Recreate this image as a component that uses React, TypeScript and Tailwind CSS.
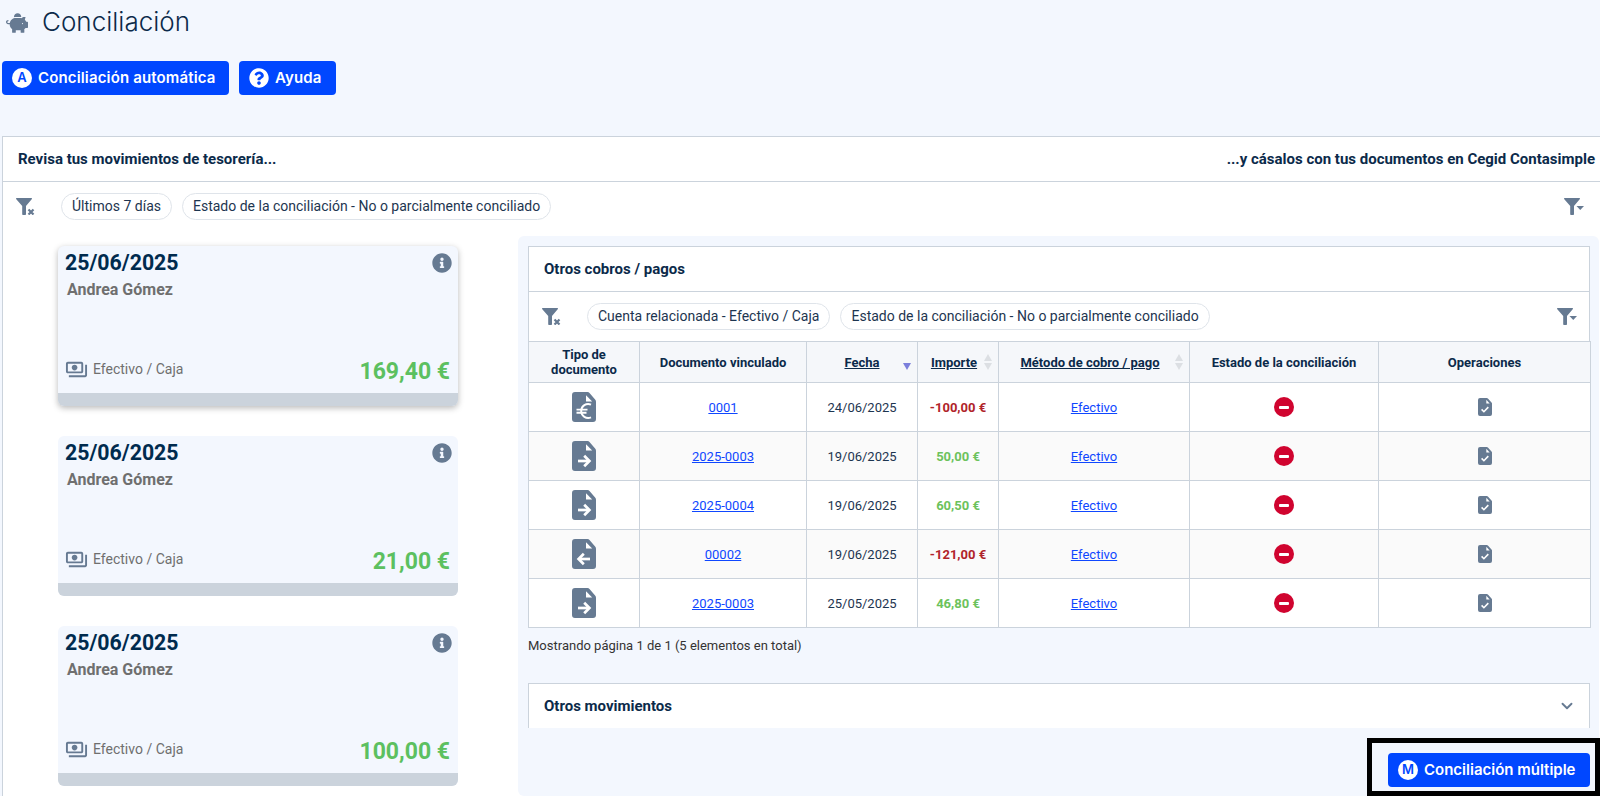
import { ChevronDown } from "lucide-react";
import { FaInfoCircle, FaPiggyBank, FaQuestionCircle } from "react-icons/fa";
import { MdOutlinePayments } from "react-icons/md";

const roboto = "font-['Roboto',sans-serif]";
const poppins = "font-['Inter',sans-serif]";

const cards = [
  { amount: "169,40 €", shadow: true },
  { amount: "21,00 €", shadow: false },
  { amount: "100,00 €", shadow: false }
];

const rows = [
  { kind: "euro", doc: "0001", date: "24/06/2025", amount: "-100,00 €", neg: true },
  { kind: "right", doc: "2025-0003", date: "19/06/2025", amount: "50,00 €", neg: false },
  { kind: "right", doc: "2025-0004", date: "19/06/2025", amount: "60,50 €", neg: false },
  { kind: "left", doc: "00002", date: "19/06/2025", amount: "-121,00 €", neg: true },
  { kind: "right", doc: "2025-0003", date: "25/05/2025", amount: "46,80 €", neg: false }
];

/* ── Icons ── */
function FunnelIcon({ mark }: { mark: "x" | "down" }) {
  return (
    <svg viewBox="0 0 20 17" className="h-[17px] w-[20px] shrink-0 text-[#667a92]" fill="currentColor">
      <path d="M0.6 0h14.8c.5 0 .8.6.5 1L10 8v8c0 .6-.4 1-1 1H7.2c-.6 0-1-.4-1-1V8L.1 1C-.2.6.1 0 .6 0z" />
      {mark === "x" ? (
        <path d="M12.5 11.5l5 5M17.5 11.5l-5 5" stroke="currentColor" strokeWidth="2.2" fill="none" />
      ) : (
        <path d="M12.5 8h7.5l-3.75 4z" />
      )}
    </svg>
  );
}

function DocIcon({ kind }: { kind: string }) {
  return (
    <svg viewBox="0 0 24 30" className="h-[30px] w-[24px]">
      <path
        d="M3 0h12.5c.8 0 1.5.3 2 .9l5.6 6.6c.6.7.9 1.5.9 2.3V27a3 3 0 0 1-3 3H3a3 3 0 0 1-3-3V3a3 3 0 0 1 3-3z"
        fill="#667a92"
      />
      <path d="M14 3.2v6.3h6.2z" fill="#fff" />
      {kind === "euro" && (
        <g fill="none" stroke="#fff" strokeWidth="1.9">
          <path d="M19 12.6a7 7 0 1 0 0 12.8" />
          <path d="M4.5 17.6h11M4.5 20.8h10" />
        </g>
      )}
      {kind === "right" && (
        <g fill="none" stroke="#fff" strokeWidth="2.7">
          <path d="M6 20h11" />
          <path d="M12.2 14.8l5.2 5.2-5.2 5.2" />
        </g>
      )}
      {kind === "left" && (
        <g fill="none" stroke="#fff" strokeWidth="2.7">
          <path d="M18 20H7" />
          <path d="M11.8 14.8L6.6 20l5.2 5.2" />
        </g>
      )}
    </svg>
  );
}

function CheckDocIcon() {
  return (
    <svg viewBox="0 0 14 18" className="h-[18px] w-[14px]">
      <path
        d="M2 0h6.8c.4 0 .8.2 1.1.5l3.6 3.9c.3.3.5.7.5 1.1V16a2 2 0 0 1-2 2H2a2 2 0 0 1-2-2V2a2 2 0 0 1 2-2z"
        fill="#667a92"
      />
      <path d="M8.3 1.8v3.6h3.4z" fill="#fff" />
      <path d="M3.6 11.4l2.3 2.3 4.4-4.6" fill="none" stroke="#fff" strokeWidth="1.6" />
    </svg>
  );
}

function SortArrows() {
  return (
    <span className="absolute right-[6px] top-1/2 flex -translate-y-1/2 flex-col gap-[2px]">
      <span className="h-0 w-0 border-x-[4px] border-b-[7px] border-x-transparent border-b-[#dcdfe3]" />
      <span className="h-0 w-0 border-x-[4px] border-t-[7px] border-x-transparent border-t-[#dcdfe3]" />
    </span>
  );
}

/* ── Small pieces ── */
function Chip({ children }: { children: string }) {
  return (
    <span className="flex h-[27px] items-center rounded-full border border-[#dfe4ea] px-[10px] text-[14px] text-[#1d3550]">
      {children}
    </span>
  );
}

function BlueButton({ glyph, label, className }: { glyph: React.ReactNode; label: string; className: string }) {
  return (
    <button type="button" className={`flex h-[34px] items-center rounded-[4px] bg-[#0047ff] pl-[10px] text-white ${className}`}>
      {glyph}
      <span className={`${poppins} ml-[6px] whitespace-nowrap pt-[1px] text-[15px] font-semibold tracking-[0.15px]`}>{label}</span>
    </button>
  );
}

function LetterGlyph({ letter }: { letter: string }) {
  return (
    <span className={`${poppins} flex h-[20px] w-[20px] items-center justify-center rounded-full bg-white text-[13px] font-semibold text-[#0047ff]`}>
      {letter}
    </span>
  );
}

/* ── Movement card ── */
function MovementCard({ amount, shadow }: { amount: string; shadow: boolean }) {
  return (
    <div className={`flex h-[160px] w-[400px] flex-col overflow-hidden rounded-[6px] bg-[#f3f7fe] ${shadow ? "shadow-[0_2px_6px_rgba(0,0,0,0.28)]" : ""}`}>
      <div className="flex flex-1 flex-col pl-[7px] pr-[8px]">
        <div className="flex items-start justify-between pt-[4px]">
          <span className="text-[21.3px] font-bold leading-[25px] text-[#002b4e]">25/06/2025</span>
          <FaInfoCircle className="mr-[-2px] mt-[3px] h-[20px] w-[20px] text-[#667a92]" />
        </div>
        <div className="ml-[2px] mt-[4px] text-[16px] font-bold leading-[22px] text-[#6f6f6f]">Andrea Gómez</div>
        <div className="mt-auto flex items-center justify-between pb-[6px]">
          <div className="flex items-center gap-[5px] pb-[6px] text-[14px] text-[#6f6f6f]">
            <MdOutlinePayments className="h-[23px] w-[23px] text-[#667a92]" />
            <span>Efectivo / Caja</span>
          </div>
          <span className="text-[23px] font-bold leading-[30px] text-[#5cc060]">{amount}</span>
        </div>
      </div>
      <div className="h-[13px] bg-[#cbd3dc]" />
    </div>
  );
}

/* ── Table ── */
function DocumentsTable() {
  const th = "relative border border-[#cbd3dc] px-1 text-center text-[13px] font-bold leading-[15px] text-[#0b2a4a]";
  const td = "border border-[#cbd3dc] text-center text-[13px] text-[#1d3550]";
  const textTd = `${td} pt-[2px]`;
  const link = "text-[#0f47ff] underline";

  return (
    <table className="w-[1062px] table-fixed border-collapse">
      <colgroup>
        <col className="w-[111px]" />
        <col className="w-[167px]" />
        <col className="w-[111px]" />
        <col className="w-[81px]" />
        <col className="w-[191px]" />
        <col className="w-[189px]" />
        <col className="w-[212px]" />
      </colgroup>
      <thead>
        <tr className="h-[41px] bg-[#f5f7fa]">
          <th className={th}>Tipo de documento</th>
          <th className={th}>Documento vinculado</th>
          <th className={th}>
            <span className="underline">Fecha</span>
            <span className="absolute right-[6px] top-[21px] h-0 w-0 border-x-[4px] border-t-[7px] border-x-transparent border-t-[#7b7fdc]" />
          </th>
          <th className={`${th} pr-[12px]`}>
            <span className="underline">Importe</span>
            <SortArrows />
          </th>
          <th className={`${th} pr-[12px]`}>
            <span className="underline">Método de cobro / pago</span>
            <SortArrows />
          </th>
          <th className={th}>Estado de la conciliación</th>
          <th className={th}>Operaciones</th>
        </tr>
      </thead>
      <tbody>
        {rows.map((row, i) => (
          <tr key={i} className={`h-[49px] ${i % 2 === 1 ? "bg-[#fafafa]" : "bg-white"}`}>
            <td className={td}>
              <div className="flex justify-center">
                <DocIcon kind={row.kind} />
              </div>
            </td>
            <td className={textTd}>
              <a className={link}>{row.doc}</a>
            </td>
            <td className={textTd}>{row.date}</td>
            <td className={`${textTd} font-bold ${row.neg ? "text-[#b0232a]" : "text-[#6cc25c]"}`}>{row.amount}</td>
            <td className={textTd}>
              <a className={link}>Efectivo</a>
            </td>
            <td className={td}>
              <div className="flex justify-center">
                <span className="flex h-[20px] w-[20px] items-center justify-center rounded-full bg-[#d0042f]">
                  <span className="h-[3px] w-[10px] rounded-[1px] bg-white" />
                </span>
              </div>
            </td>
            <td className={td}>
              <div className="flex justify-center">
                <CheckDocIcon />
              </div>
            </td>
          </tr>
        ))}
      </tbody>
    </table>
  );
}

export default function App() {
  return (
    <div className={`${roboto} relative flex h-[796px] w-[1600px] flex-col overflow-hidden bg-[#f3f7fe]`}>
      {/* Title */}
      <div className="flex h-[44px] items-center pl-[6px]">
        <FaPiggyBank className="mt-[2px] h-[22px] w-[22px] text-[#667a92]" />
        <h1 className={`${poppins} ml-[14px] pb-[2px] text-[26px] font-light text-[#0b2a4a]`}>Conciliación</h1>
      </div>

      {/* Actions */}
      <div className="ml-[2px] mt-[17px] flex gap-[10px]">
        <BlueButton className="w-[227px]" glyph={<LetterGlyph letter="A" />} label="Conciliación automática" />
        <BlueButton className="w-[97px]" glyph={<FaQuestionCircle className="h-[20px] w-[20px]" />} label="Ayuda" />
      </div>

      {/* Panel */}
      <div className="ml-[2px] mt-[41px] flex min-h-0 flex-1 flex-col border-l border-t border-[#cbd3dc] bg-white">
        <div className="flex h-[45px] shrink-0 items-center justify-between border-b border-[#cbd3dc] pl-[15px] pr-[5px] text-[15px] font-bold text-[#0b2a4a]">
          <span>Revisa tus movimientos de tesorería...</span>
          <span>...y cásalos con tus documentos en Cegid Contasimple</span>
        </div>

        <div className="flex h-[54px] shrink-0 items-start pl-[13px] pr-[16px] pt-[11px]">
          <div className="mt-[5px]">
            <FunnelIcon mark="x" />
          </div>
          <div className="ml-[25px] flex gap-[10px]">
            <Chip>Últimos 7 días</Chip>
            <Chip>Estado de la conciliación - No o parcialmente conciliado</Chip>
          </div>
          <div className="ml-auto mt-[5px]">
            <FunnelIcon mark="down" />
          </div>
        </div>

        <div className="flex min-h-0 flex-1">
          {/* Movements */}
          <div className="flex w-[515px] shrink-0 flex-col gap-[30px] pl-[55px] pt-[10px]">
            {cards.map((card, i) => (
              <MovementCard key={i} amount={card.amount} shadow={card.shadow} />
            ))}
          </div>

          {/* Documents */}
          <div className="ml-0 w-[1081px] shrink-0 rounded-[6px] bg-[#f3f7fe] pl-[10px] pt-[10px]">
            <div className="w-[1062px] bg-white">
              <div className="flex h-[45px] items-center border-x border-t border-[#cbd3dc] pl-[15px] text-[15px] font-bold text-[#0b2a4a]">
                Otros cobros / pagos
              </div>
              <div className="flex h-[50px] items-center border-x border-t border-[#cbd3dc] pl-[13px] pr-[12px]">
                <FunnelIcon mark="x" />
                <div className="ml-[25px] flex gap-[10px]">
                  <Chip>Cuenta relacionada - Efectivo / Caja</Chip>
                  <Chip>Estado de la conciliación - No o parcialmente conciliado</Chip>
                </div>
                <div className="ml-auto">
                  <FunnelIcon mark="down" />
                </div>
              </div>
              <DocumentsTable />
            </div>
            <p className="mt-[10px] text-[13px] leading-[15px] text-[#333]">Mostrando página 1 de 1 (5 elementos en total)</p>
            <div className="mt-[30px] flex h-[45px] w-[1062px] items-center justify-between border-x border-t border-[#cbd3dc] bg-white pl-[15px] pr-[13px] text-[15px] font-bold text-[#0b2a4a]">
              <span>Otros movimientos</span>
              <ChevronDown className="h-[18px] w-[18px] text-[#667a92]" strokeWidth={2.5} />
            </div>
          </div>
        </div>
      </div>

      {/* Highlighted action */}
      <div className="absolute bottom-0 right-0 flex h-[58px] w-[233px] items-end justify-end border-[5px] border-black pb-[4px] pr-[5px]">
        <button type="button" className="flex h-[34px] w-[202px] items-center rounded-[4px] bg-[#0047ff] pl-[10px] text-white">
          <LetterGlyph letter="M" />
          <span className={`${poppins} ml-[6px] whitespace-nowrap pt-[1px] text-[15px] font-semibold`}>Conciliación múltiple</span>
        </button>
      </div>
    </div>
  );
}
